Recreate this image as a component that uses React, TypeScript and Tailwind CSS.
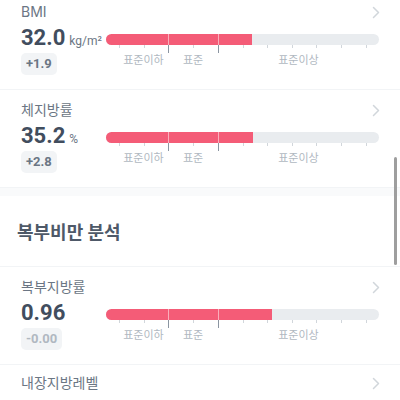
import * as React from "react";

const SHORT_TICKS = [13, 38, 87, 137, 161, 186, 210, 235, 260];
const LONG_TICKS = [62, 112];

interface MetricRowProps {
  label: string;
  value: string;
  unit?: string;
  delta: string;
  deltaMuted?: boolean;
  fill: number;
}

function Chevron() {
  return (
    <svg width="8" height="13" viewBox="0 0 8 13" fill="none" className="mr-[-1px] mt-[4px]">
      <path d="M1.5 1.5 L6.5 6.5 L1.5 11.5" stroke="#d1d6db" strokeWidth="1.5" strokeLinecap="round" strokeLinejoin="round" />
    </svg>
  );
}

function RangeBar({ fill }: { fill: number }) {
  return (
    <div className="w-[273px] pt-[10px]">
      <div className="relative h-[11px] rounded-full bg-[#e9ecef] overflow-hidden">
        <div className="h-full bg-[#f45c77]" style={{ width: fill }} />
        <div className="absolute top-0 left-[62px] h-full w-px bg-white/50" />
        <div className="absolute top-0 left-[112px] h-full w-px bg-white/50" />
      </div>
      <svg width="273" height="8" className="block">
        {SHORT_TICKS.map((x) => (
          <line key={x} x1={x + 0.5} y1="0" x2={x + 0.5} y2="3" stroke="#d1d6db" strokeWidth="1" />
        ))}
        {LONG_TICKS.map((x) => (
          <line key={x} x1={x + 0.5} y1="0" x2={x + 0.5} y2="8" stroke="#8b95a1" strokeWidth="1" />
        ))}
      </svg>
      <div className="flex pl-[13px] text-[11px] leading-[14px] text-[#b0b8c1]">
        <span className="w-[49px] text-center">표준이하</span>
        <span className="w-[50px] text-center">표준</span>
        <span className="flex-1 text-center">표준이상</span>
      </div>
    </div>
  );
}

function MetricRow({ label, value, unit, delta, deltaMuted, fill }: MetricRowProps) {
  return (
    <div className="px-[21px] pt-[10px] pb-[14px] border-b border-[#f2f4f6]">
      <div className="flex items-start justify-between h-[19px]">
        <span className="text-[14px] leading-[19px] text-[#6b7684]">{label}</span>
        <Chevron />
      </div>
      <div className="flex mt-[3px]">
        <div className="w-[85px] flex flex-col items-start">
          <div className="flex items-baseline h-[28px] leading-[28px] font-['Roboto',sans-serif]">
            <span className="text-[22px] font-bold text-[#414d5e]">{value}</span>
            {unit && <span className="ml-[4px] text-[12px] text-[#6b7684]">{unit}</span>}
          </div>
          <div
            className={`mt-[1px] h-[22px] px-[5px] rounded-[5px] bg-[#f2f4f6] flex items-center text-[13px] font-bold font-['Roboto',sans-serif] ${
              deltaMuted ? "text-[#b0b8c1]" : "text-[#6b7684]"
            }`}
          >
            {delta}
          </div>
        </div>
        <RangeBar fill={fill} />
      </div>
    </div>
  );
}

export default function App() {
  return (
    <div
      className="relative w-[400px] h-[400px] overflow-hidden bg-white"
      style={{ fontFamily: 'Inter, "Noto Sans CJK KR", sans-serif' }}
    >
      <div className="mt-[-8px]">
        <MetricRow label="BMI" value="32.0" unit="kg/m²" delta="+1.9" fill={146} />
        <MetricRow label="체지방률" value="35.2" unit="%" delta="+2.8" fill={147} />
        <div className="h-[8px] bg-[#f9fafb]" />
        <div className="px-[17px] pt-[25px] pb-[21px] border-b border-[#f2f4f6]">
          <h2 className="text-[18px] leading-[24px] font-bold text-[#4e5968]">복부비만 분석</h2>
        </div>
        <MetricRow label="복부지방률" value="0.96" delta="-0.00" deltaMuted fill={166} />
        <div className="px-[21px] pt-[8px]">
          <div className="flex items-start justify-between h-[19px]">
            <span className="text-[14px] leading-[19px] text-[#6b7684]">내장지방레벨</span>
            <Chevron />
          </div>
        </div>
      </div>
      <div className="absolute right-[3px] top-[157px] w-[3px] h-[108px] rounded-full bg-[#9e9e9e]" />
    </div>
  );
}
